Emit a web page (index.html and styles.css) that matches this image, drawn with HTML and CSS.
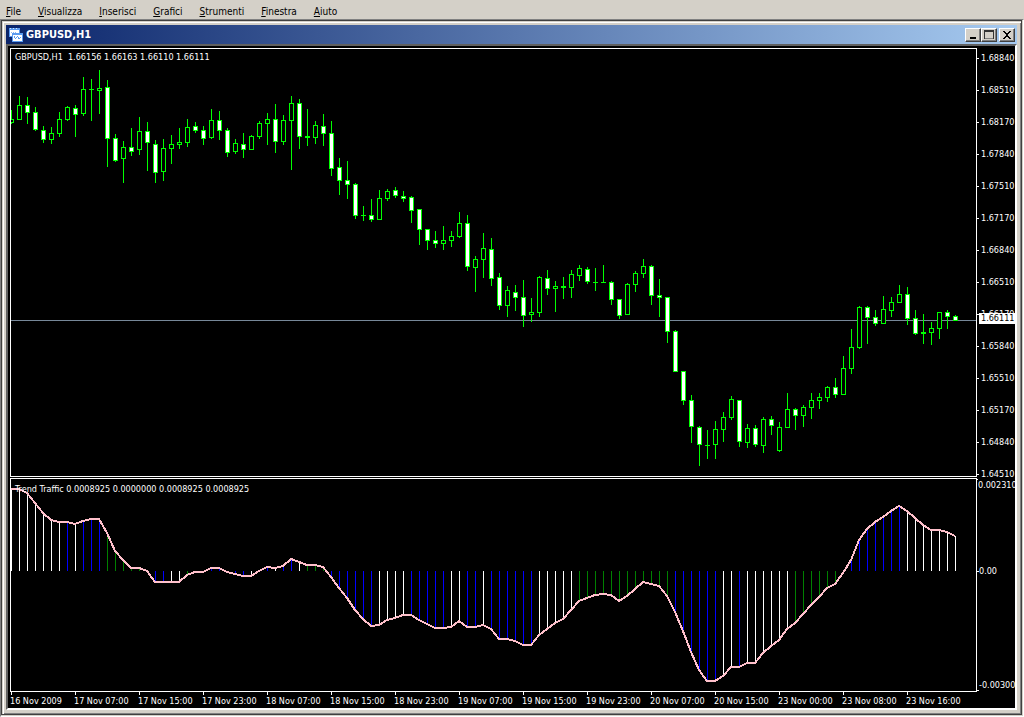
FILE: index.html
```html
<!DOCTYPE html>
<html lang="it">
<head>
<meta charset="utf-8">
<title>GBPUSD,H1</title>
<link rel="stylesheet" href="styles.css">
</head>
<body>
<nav class="menu">
  <button class="menu-item" type="button"><u>F</u>ile</button>
  <button class="menu-item" type="button"><u>V</u>isualizza</button>
  <button class="menu-item" type="button"><u>I</u>nserisci</button>
  <button class="menu-item" type="button"><u>G</u>rafici</button>
  <button class="menu-item" type="button"><u>S</u>trumenti</button>
  <button class="menu-item" type="button"><u>F</u>inestra</button>
  <button class="menu-item" type="button"><u>A</u>iuto</button>
</nav>
<main class="workspace">
  <section class="window">
    <header class="titlebar">
      <svg class="app-icon" width="14" height="14" viewBox="0 0 14 14" shape-rendering="crispEdges" aria-hidden="true">
        <rect x="0" y="0" width="11" height="9" fill="#5b9bf0"/>
        <rect x="1" y="2" width="9" height="6" fill="#fff"/>
        <path d="M1 0h1v1h-1zM4 0h1v1h-1zM7 0h1v1h-1z" fill="#d8e8ff"/>
        <path d="M2 4h1v1h-1zM3 5h1v1h-1zM4 4h1v1h-1zM6 4h1v1h-1z" fill="#8db8f0"/>
        <rect x="3" y="5" width="11" height="9" fill="#5b9bf0"/>
        <rect x="4" y="7" width="9" height="6" fill="#fff"/>
        <path d="M5 8h1v2h-1zM6 10h1v1h-1zM7 9h1v1h-1zM8 8h1v1h-1zM9 9h1v2h-1zM10 10h1v1h-1zM11 9h1v1h-1z" fill="#5b9bf0"/>
      </svg>
      <h1 class="title">GBPUSD,H1</h1>
      <div class="controls">
        <button class="control" type="button" aria-label="Riduci a icona"><svg width="12" height="11" viewBox="0 0 12 11" shape-rendering="crispEdges"><path d="M3 8h6v2H3z"/></svg></button>
        <button class="control" type="button" aria-label="Ingrandisci"><svg width="12" height="11" viewBox="0 0 12 11" shape-rendering="crispEdges"><path fill="#333" fill-rule="evenodd" d="M1 1h10v9H1zM2 3v6h8V3z"/><path fill="#808080" d="M2 9h8v1H2z"/></svg></button>
        <button class="control control-close" type="button" aria-label="Chiudi"><svg width="12" height="11" viewBox="0 0 12 11" shape-rendering="crispEdges"><path d="M2 2h2v1h1v1h2V3h1V2h2v1H9v1H8v1H7v2h1v1h1v1h1v1H8V9H7V8H5v1H4v1H2V9h1V8h1V7h1V5H4V4H3V3H2z"/></svg></button>
      </div>
    </header>
    <div class="chart">
      <div class="pane pane-price">
        <div class="plot">
          <svg class="drawing" id="price" shape-rendering="crispEdges"></svg>
          <p class="legend">GBPUSD,H1&nbsp; 1.66156 1.66163 1.66110 1.66111</p>
        </div>
        <ul class="axis axis-price">
          <li>1.68840</li><li>1.68510</li><li>1.68170</li><li>1.67840</li><li>1.67510</li><li>1.67170</li><li>1.66840</li>
          <li>1.66510</li><li>1.66170<span class="quote">1.66111</span></li><li>1.65840</li><li>1.65510</li><li>1.65170</li><li>1.64840</li><li>1.64510</li>
        </ul>
      </div>
      <div class="pane pane-trend">
        <div class="plot">
          <svg class="drawing" id="trend" shape-rendering="crispEdges"></svg>
          <p class="legend">Trend Traffic 0.0008925 0.0000000 0.0008925 0.0008925</p>
        </div>
        <ul class="axis axis-trend">
          <li>0.002310</li><li>0.00</li><li>-0.00300</li>
        </ul>
      </div>
      <ol class="dates">
        <li>16 Nov 2009</li><li>17 Nov 07:00</li><li>17 Nov 15:00</li><li>17 Nov 23:00</li><li>18 Nov 07:00</li>
        <li>18 Nov 15:00</li><li>18 Nov 23:00</li><li>19 Nov 07:00</li><li>19 Nov 15:00</li><li>19 Nov 23:00</li>
        <li>20 Nov 07:00</li><li>20 Nov 15:00</li><li>23 Nov 00:00</li><li>23 Nov 08:00</li><li>23 Nov 16:00</li>
      </ol>
    </div>
  </section>
</main>
<script src="chart.js"></script>
</body>
</html>
```
FILE: styles.css
```css
* { box-sizing: border-box; }

body {
  margin: 0;
  height: 100vh;
  display: flex;
  flex-direction: column;
  background: #d4d0c8;
  color: #000;
  font-family: "DejaVu Sans Condensed", "DejaVu Sans", sans-serif;
  font-stretch: condensed;
  overflow: hidden;
}

ul, ol, p, h1 { margin: 0; padding: 0; list-style: none; }

.menu {
  display: flex;
  height: 19px;
  padding: 4px 6px 0;
  gap: 17px;
}
.menu-item {
  border: 0;
  padding: 0;
  background: none;
  font-family: inherit;
  font-stretch: inherit;
  font-size: 10px;
  line-height: 15px;
  color: #000;
}

.workspace {
  flex: 1;
  min-height: 0;
  display: flex;
  border: 1px solid #808080;
  border-right-color: #fff;
  border-bottom-color: #fff;
  padding-bottom: 1px;
  padding-right: 1px;
}
.window {
  flex: 1;
  min-width: 0;
  display: flex;
  flex-direction: column;
  border: 1px solid #404040;
  padding: 4px;
  box-shadow: inset 1px 1px #d4d0c8, inset 2px 2px #fff, inset -1px -1px #808080;
}

.titlebar {
  display: flex;
  align-items: center;
  height: 19px;
  padding: 0 2px 0 3px;
  gap: 3px;
  background: linear-gradient(90deg, #0a246a, #a6caf0);
}
.title {
  flex: 1;
  color: #fff;
  font-size: 11px;
  font-weight: bold;
  line-height: 18px;
}
.controls { display: flex; }
.control {
  width: 16px;
  height: 14px;
  padding: 0;
  display: flex;
  justify-content: center;
  align-items: center;
  border: 1px solid;
  border-color: #fff #404040 #404040 #fff;
  box-shadow: inset -1px -1px #808080;
  background: #d4d0c8;
}
.control-close { margin-left: 2px; }

.chart {
  flex: 1;
  min-height: 0;
  display: flex;
  flex-direction: column;
  padding: 2px 0 0 2px;
  background: #000;
  color: #fff;
  border: 2px solid #404040;
  border-top-color: #606060;
  border-left-color: #606060;
  border-right: 2px solid #fff;
  border-bottom: 2px solid #fff;
  font-size: 9px;
  line-height: 12px;
}
.pane {
  display: flex;
  min-height: 0;
}
.pane-price { flex: 429; }
.pane-trend { flex: 214; margin-top: 1px; }
.plot {
  flex: 1;
  min-width: 0;
  position: relative;
  border: 1px solid #fff;
}
.drawing {
  position: absolute;
  width: 100%;
  height: 100%;
}
.legend {
  position: absolute;
  top: 2px;
  left: 4px;
  white-space: nowrap;
}
.pane-trend .legend { top: 4px; }

.axis {
  width: 38px;
}
.axis li {
  display: flex;
  align-items: center;
  gap: 2px;
  height: 12px;
  white-space: nowrap;
  position: relative;
}
.axis li::before {
  content: "";
  flex: none;
  width: 2px;
  height: 1px;
  background: #fff;
}
.axis-price {
  display: flex;
  flex-direction: column;
  justify-content: space-between;
  padding-top: 4px;
  margin-bottom: -3px;
}
.axis-trend {
  display: grid;
  grid-template-rows: 86fr 114fr 12px;
  padding: 1px 0;
}
.axis-trend li { gap: 0; }
.axis-trend li:first-child::before { align-self: flex-start; width: 1px; }
.axis-trend li:last-child::before { align-self: flex-end; }
.quote {
  position: absolute;
  top: 5px;
  left: 2px;
  right: 0;
  padding-left: 2px;
  line-height: 11px;
  background: #fff;
  color: #000;
}

.dates {
  display: flex;
  height: 16px;
  overflow: hidden;
}
.dates li {
  flex: 0 0 64px;
  white-space: nowrap;
}
.dates li::before {
  content: "";
  display: block;
  width: 1px;
  height: 3px;
  margin-left: 1px;
  background: #fff;
}
```
FILE: chart.js
```js
const STEP = 8;
const NS = "http://www.w3.org/2000/svg";

// Each bar: high, body top, body bottom, low, type (u = up, d = down)
const bars = `110 119 123 124 u|96 105 120 120 u|97 105 113 124 d|107 112 130 131 d|126 130 140 143 d|127 133 140 144 u|112 119 134 137 u|106 107 120 121 u|105 108 115 137 d|77 89 114 116 u|79 89 90 121 u|70 88 91 114 u|80 87 139 167 d|134 138 161 162 d|141 147 159 183 u|128 147 152 156 d|117 131 150 155 u|122 131 143 171 d|140 144 173 183 d|139 148 172 181 u|135 144 149 164 u|128 142 145 149 u|119 127 143 147 u|122 126 131 133 d|126 130 139 145 d|109 120 138 139 u|111 120 131 140 d|128 130 153 157 d|139 143 152 154 u|133 144 150 158 d|135 136 150 150 u|121 123 137 139 u|113 119 124 145 u|104 119 142 153 d|115 120 142 145 u|96 103 121 170 u|99 103 137 149 d|109 136 138 146 u|121 125 138 144 u|114 126 134 146 d|121 133 169 176 d|158 167 181 195 d|161 180 185 199 d|183 184 216 219 d|206 215 216 221 u|199 215 220 222 d|190 198 220 220 u|189 191 199 201 u|187 190 196 198 d|191 196 199 202 d|196 197 211 223 d|209 209 230 245 d|229 229 241 250 d|231 240 244 248 d|226 240 244 250 u|231 236 241 247 u|212 223 237 238 u|215 223 267 271 d|256 259 268 292 u|233 248 260 278 u|238 249 279 286 d|273 277 306 310 d|286 290 306 317 u|285 292 298 311 d|280 297 316 327 d|298 312 315 322 u|276 277 313 317 u|270 278 289 295 d|281 286 289 312 u|277 286 288 299 u|270 274 288 298 u|265 268 276 281 u|267 269 282 284 d|268 282 283 291 u|265 282 283 283 u|281 282 300 305 d|299 299 316 319 d|283 284 315 315 u|271 273 285 292 u|259 266 274 278 u|265 266 296 305 d|279 295 298 317 d|297 297 332 343 d|330 331 372 372 d|371 371 401 405 d|395 400 427 443 d|426 427 445 466 d|430 445 446 459 u|421 429 445 459 u|412 417 430 442 u|396 399 418 420 u|400 400 442 447 d|424 428 443 448 u|425 428 445 447 d|417 419 446 453 u|416 419 426 435 d|422 427 451 452 u|393 409 428 428 u|408 409 416 430 d|405 407 416 427 u|393 400 408 419 u|393 397 401 409 u|386 387 398 402 u|378 387 395 398 d|356 368 395 395 u|329 347 369 374 u|306 307 348 349 u|306 307 318 344 d|310 317 324 326 d|296 309 324 324 u|297 302 311 317 u|285 294 303 303 u|287 294 319 325 d|310 318 334 335 d|314 332 334 344 u|322 328 333 345 u|312 312 329 339 u|310 312 317 329 d|315 316 321 321 d`;

const trend = [489,489,493,503,513,520,522,522,524,521,519,519,533,551,560,568,568,571,582,582,582,582,575,572,572,568,568,572,574,576,576,571,567,568,566,559,562,565,565,567,577,588,598,610,619,626,625,620,618,615,615,620,624,628,628,627,621,627,627,625,629,639,639,641,645,645,635,629,623,619,610,601,598,595,594,595,601,596,589,582,584,586,596,612,631,652,670,681,681,676,667,667,663,663,653,646,640,629,623,614,605,597,588,584,573,560,540,529,522,517,511,506,511,518,525,530,530,532,536];

// One letter per bar: w = white, b = blue, g = green
const tones = "wwwwwwwbwbbbgggggg" + "bbwwggg" + "bbgbbwbbwbb" + "wggg" + "bbbbbbwwww" + "bbbbbwwbbw" + "bbbbbbwwwww" + "gggggggggggg" + "bbbbbbwwbwwwwww" + "ggggggg" + "bbbbbbbwwwwwww";
const palette = { w: "#ffffff", b: "#0000ff", g: "#008000" };

function add(parent, name, attrs) {
  const node = document.createElementNS(NS, name);
  for (const key in attrs) node.setAttribute(key, attrs[key]);
  parent.appendChild(node);
}
function box(parent, x, y, width, height, fill) {
  if (height > 0) add(parent, "rect", { x, y, width, height, fill });
}

const price = document.getElementById("price");
const PRICE_TOP = 49;
box(price, 0, 320 - PRICE_TOP, "100%", 1, "#778899");
bars.split("|").forEach((row, i) => {
  const [high, top, bottom, low, type] = row.split(" ");
  const x = i * STEP;
  box(price, x, high - PRICE_TOP, 1, low - high, "#00ff00");
  box(price, x - 2, top - PRICE_TOP, 5, bottom - top, "#00ff00");
  box(price, x - 1, top - PRICE_TOP + 1, 3, bottom - top - 2, type === "d" ? "#ffffff" : "#000000");
});

const sub = document.getElementById("trend");
const TREND_TOP = 479;
const ZERO = 571 - TREND_TOP;
trend.forEach((value, i) => {
  const y = value - TREND_TOP;
  box(sub, i * STEP, Math.min(y, ZERO), 1, Math.abs(y - ZERO), palette[tones[i]]);
});
add(sub, "polyline", {
  points: trend.map((value, i) => `${i * STEP},${value - TREND_TOP}`).join(" "),
  fill: "none", stroke: "#ffc0cb", "stroke-width": 2
});
```
